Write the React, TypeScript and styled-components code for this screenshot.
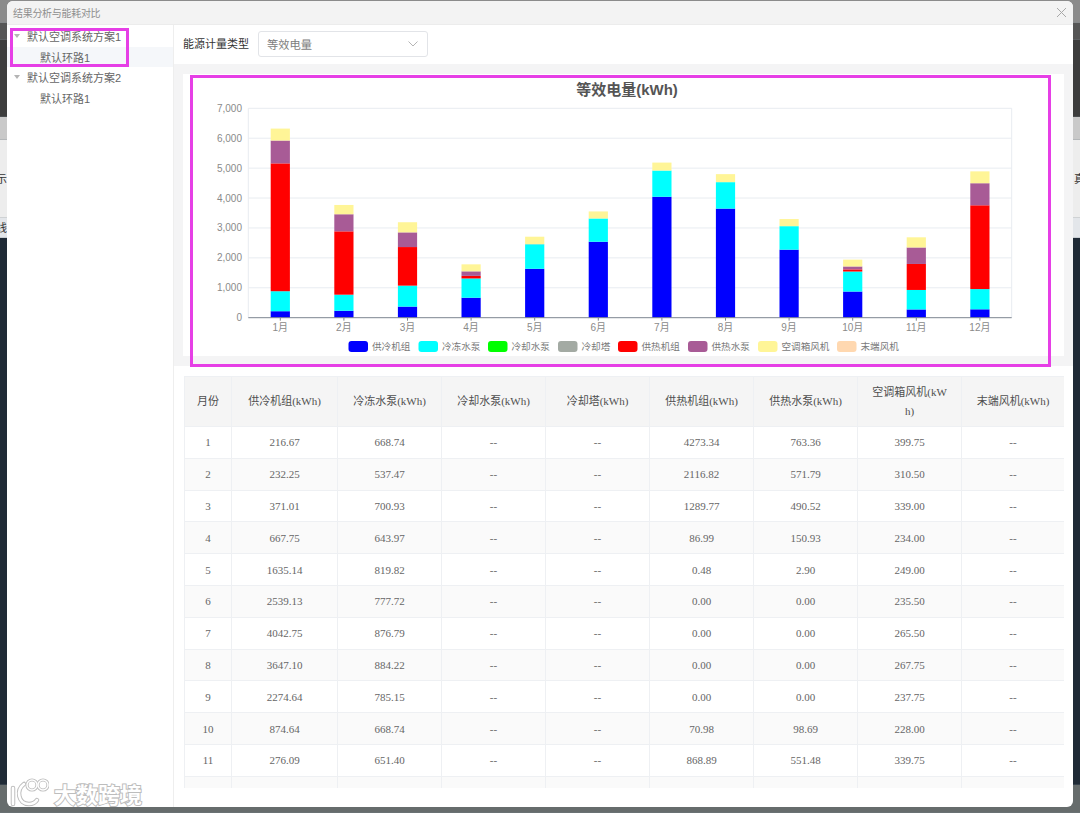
import React from "react";
import styled, { createGlobalStyle } from "styled-components";

const Global = createGlobalStyle`
  html, body { margin: 0; padding: 0; height: 813px; overflow: hidden; background: #1f2a36; }
  * { box-sizing: border-box; }
`;

const Page = styled.div`
  position: relative;
  width: 1080px;
  height: 813px;
  overflow: hidden;
  font-family: "Liberation Sans", "Noto Sans CJK SC", sans-serif;
`;

const Backdrop = styled.div`
  display: flex;
  flex-direction: column;
  height: 813px;
`;

const Band = styled.div<{ $h: number; $bg: string; $c?: string }>`
  flex: 0 0 ${(p) => p.$h}px;
  background: ${(p) => p.$bg};
  color: ${(p) => p.$c || "#333"};
  display: flex;
  justify-content: space-between;
  align-items: center;
  font-size: 11px;
  line-height: 12px;
  overflow: hidden;
  border-bottom: 1px solid rgba(120, 130, 140, 0.25);
`;

const EdgeLeft = styled.span`
  margin-left: -4px;
`;

const EdgeRight = styled.span`
  margin-right: -5px;
`;

const Modal = styled.div`
  position: absolute;
  left: 7px;
  top: 1px;
  width: 1066px;
  height: 806px;
  background: #fff;
  border-radius: 6px;
  overflow: hidden;
  display: flex;
  flex-direction: column;
`;

const ModalHeader = styled.header`
  flex: 0 0 24px;
  background: #f3f3f3;
  border-bottom: 1px solid #ececec;
  display: flex;
  align-items: center;
  justify-content: space-between;
  padding: 0 6px;
  color: #8e8e8e;
  font-size: 10px;
`;

const Title = styled.span`
  letter-spacing: -0.3px;
`;

const ModalBody = styled.div`
  flex: 1;
  display: flex;
  min-height: 0;
`;

const Sidebar = styled.aside`
  flex: 0 0 167px;
  border-right: 1px solid #eeeeee;
  padding-top: 1px;
`;

const TreeRow = styled.div<{ $child?: boolean; $selected?: boolean }>`
  height: 20.6px;
  display: flex;
  align-items: center;
  gap: 7px;
  padding-left: ${(p) => (p.$child ? 33 : 7)}px;
  background: ${(p) => (p.$selected ? "#f5f7fa" : "transparent")};
  color: #666;
  font-size: 11px;
  white-space: nowrap;
`;

const Caret = styled.i`
  width: 0;
  height: 0;
  margin-top: -1px;
  border-left: 3px solid transparent;
  border-right: 3px solid transparent;
  border-top: 4px solid #b4b4b4;
`;

const Content = styled.main`
  flex: 1;
  min-width: 0;
  display: flex;
  flex-direction: column;
`;

const FilterBar = styled.div`
  flex: 0 0 39px;
  display: flex;
  align-items: center;
  gap: 9px;
  padding-left: 9px;
  padding-bottom: 1px;
`;

const FilterLabel = styled.label`
  font-size: 11px;
  color: #333;
  margin-top: -2px;
`;

const Select = styled.div`
  width: 170px;
  height: 26px;
  border: 1px solid #e2e4e8;
  border-radius: 3px;
  display: flex;
  align-items: center;
  justify-content: space-between;
  padding: 0 9px 0 8px;
  font-size: 11.25px;
  color: #7d7d7d;
`;

const ChartBand = styled.section`
  flex: 0 0 302px;
  background: #f4f4f5;
  padding: 10px 9px 10px 9px;
`;

const ChartPanel = styled.div`
  height: 282px;
  background: #fff;
`;

const ChartSvg = styled.svg`
  display: block;
  font-family: "Liberation Sans", "Noto Sans CJK SC", sans-serif;
`;

const TableArea = styled.section`
  flex: 1;
  min-height: 0;
  padding: 10px 9px 19px 10px;
`;

const TableClip = styled.div`
  height: 100%;
  overflow: hidden;
`;

const DataTable = styled.table`
  width: 880px;
  table-layout: fixed;
  border-collapse: collapse;
  font-family: "Liberation Serif", "Noto Sans CJK SC", serif;
  font-size: 11px;
  color: #666;
`;

const Th = styled.th`
  height: 50px;
  padding: 0 12px;
  background: #f5f5f5;
  border: 1px solid #eef0f3;
  color: #4f4f4f;
  font-weight: 400;
  line-height: 19px;
  text-align: center;
  word-break: break-all;
`;

const Tr = styled.tr<{ $striped: boolean }>`
  height: 31.8px;
  background: ${(p) => (p.$striped ? "#fafafa" : "#fff")};
`;

const Td = styled.td`
  padding: 0;
  border: 1px solid #eef0f3;
  text-align: center;
`;

const Highlight = styled.div<{ $l: number; $t: number; $w: number; $h: number }>`
  position: absolute;
  left: ${(p) => p.$l}px;
  top: ${(p) => p.$t}px;
  width: ${(p) => p.$w}px;
  height: ${(p) => p.$h}px;
  border: 3px solid #e63fe6;
  pointer-events: none;
`;

const Watermark = styled.div`
  position: absolute;
  left: 9px;
  top: 778px;
  display: flex;
  align-items: center;
  gap: 5px;
`;

const WatermarkText = styled.span`
  font-family: "Noto Sans CJK SC", sans-serif;
  font-size: 22px;
  line-height: 30px;
  font-weight: 700;
  color: #fff;
  -webkit-text-stroke: 2px #bdbdbd;
  paint-order: stroke fill;
  letter-spacing: 0;
`;

const months = ["1月", "2月", "3月", "4月", "5月", "6月", "7月", "8月", "9月", "10月", "11月", "12月"];
const rows: string[][] = [
  ["1", "216.67", "668.74", "--", "--", "4273.34", "763.36", "399.75", "--"],
  ["2", "232.25", "537.47", "--", "--", "2116.82", "571.79", "310.50", "--"],
  ["3", "371.01", "700.93", "--", "--", "1289.77", "490.52", "339.00", "--"],
  ["4", "667.75", "643.97", "--", "--", "86.99", "150.93", "234.00", "--"],
  ["5", "1635.14", "819.82", "--", "--", "0.48", "2.90", "249.00", "--"],
  ["6", "2539.13", "777.72", "--", "--", "0.00", "0.00", "235.50", "--"],
  ["7", "4042.75", "876.79", "--", "--", "0.00", "0.00", "265.50", "--"],
  ["8", "3647.10", "884.22", "--", "--", "0.00", "0.00", "267.75", "--"],
  ["9", "2274.64", "785.15", "--", "--", "0.00", "0.00", "237.75", "--"],
  ["10", "874.64", "668.74", "--", "--", "70.98", "98.69", "228.00", "--"],
  ["11", "276.09", "651.40", "--", "--", "868.89", "551.48", "339.75", "--"],
  ["12", "280.48", "676.17", "--", "--", "2800.92", "737.84", "396.36", "--"],
];
const headers = ["月份", "供冷机组(kWh)", "冷冻水泵(kWh)", "冷却水泵(kWh)", "冷却塔(kWh)", "供热机组(kWh)", "供热水泵(kWh)", "空调箱风机(kWh)", "末端风机(kWh)"];
const widths = [47, 106, 104, 104, 104, 104, 104, 104, 103];

const series = [
  { name: "供冷机组", color: "#0000ff", col: 1, x: 165.5 },
  { name: "冷冻水泵", color: "#00ffff", col: 2, x: 235.5 },
  { name: "冷却水泵", color: "#00ff00", col: 3, x: 305 },
  { name: "冷却塔", color: "#a3aaa3", col: 4, x: 375 },
  { name: "供热机组", color: "#ff0000", col: 5, x: 435 },
  { name: "供热水泵", color: "#a85b96", col: 6, x: 505 },
  { name: "空调箱风机", color: "#fff597", col: 7, x: 575 },
  { name: "末端风机", color: "#ffd8b0", col: 8, x: 654 },
];

const plot = { left: 65.3, right: 828.7, top: 34.3, bottom: 243.7 };
const yOf = (v: number) => plot.bottom - (v / 7000) * (plot.bottom - plot.top);
const num = (s: string) => (s === "--" ? 0 : parseFloat(s));

const Chart = () => (
  <ChartSvg width={881} height={282} viewBox="0 0 881 282">
    <text x={444} y={21} textAnchor="middle" fontSize={15} fontWeight={700} fill="#555">
      等效电量(kWh)
    </text>
    {[0, 1, 2, 3, 4, 5, 6, 7].map((i) => (
      <g key={i}>
        {i > 0 && <line x1={plot.left} x2={plot.right} y1={yOf(i * 1000)} y2={yOf(i * 1000)} stroke="#e8ecf1" />}
        <text x={59} y={yOf(i * 1000) + 3.5} textAnchor="end" fontSize={10} fill="#8a8a8a">
          {i === 0 ? "0" : `${i},000`}
        </text>
      </g>
    ))}
    <line x1={plot.left} x2={plot.left} y1={plot.top} y2={plot.bottom} stroke="#e8ecf1" />
    <line x1={plot.right} x2={plot.right} y1={plot.top} y2={plot.bottom} stroke="#e8ecf1" />
    {months.map((m, i) => {
      const cx = 97.3 + i * 63.6;
      let acc = 0;
      return (
        <g key={m}>
          {series.map((s) => {
            const v = num(rows[i][s.col]);
            if (v <= 0) return null;
            const y1 = yOf(acc);
            acc += v;
            const y2 = yOf(acc);
            return <rect key={s.name} x={cx - 9.6} width={19.2} y={y2} height={y1 - y2} fill={s.color} />;
          })}
          <line x1={cx} x2={cx} y1={plot.bottom} y2={plot.bottom + 3} stroke="#7d8590" />
          <text x={cx} y={257} textAnchor="middle" fontSize={10} fill="#8a8a8a">
            {m}
          </text>
        </g>
      );
    })}
    <line x1={plot.left} x2={plot.right} y1={plot.bottom} y2={plot.bottom} stroke="#7d8590" />
    {series.map((s) => (
      <g key={s.name}>
        <rect x={s.x} y={267} width={19.5} height={11} rx={3} fill={s.color} />
        <text x={s.x + 23.5} y={275.5} fontSize={9.6} fill="#7a7a7a">
          {s.name}
        </text>
      </g>
    ))}
  </ChartSvg>
);

const Logo = () => (
  <svg width="40" height="30" viewBox="0 0 40 30" fill="none">
    <g stroke="#bdbdbd" strokeWidth="4.5" strokeLinecap="round">
      <path d="M4 10 L4 26" />
      <path d="M15 6 C7 12 9 26 20 26 C23 26 26 25 28 22" />
    </g>
    <g stroke="#bdbdbd" strokeWidth="3.2">
      <circle cx="23" cy="7" r="5" />
      <circle cx="34" cy="7" r="5" />
    </g>
    <g stroke="#fff" strokeWidth="2.6" strokeLinecap="round">
      <path d="M4 10 L4 26" />
      <path d="M15 6 C7 12 9 26 20 26 C23 26 26 25 28 22" />
    </g>
    <g stroke="#fff" strokeWidth="1.5">
      <circle cx="23" cy="7" r="5" />
      <circle cx="34" cy="7" r="5" />
    </g>
  </svg>
);

export default function App() {
  return (
    <Page>
      <Global />
      <Backdrop>
        <Band $h={23} $bg="#8b8b8b" />
        <Band $h={17} $bg="#565656" />
        <Band $h={77} $bg="#3d3d3d" />
        <Band $h={23} $bg="#c9c9c9" />
        <Band $h={78} $bg="#ededed">
          <EdgeLeft>示</EdgeLeft>
          <EdgeRight>真</EdgeRight>
        </Band>
        <Band $h={20} $bg="#e3e6ea">
          <EdgeLeft>线</EdgeLeft>
        </Band>
        <Band $h={547} $bg="#1f2a36" />
        <Band $h={28} $bg="#666c6c" />
      </Backdrop>
      <Modal>
        <ModalHeader>
          <Title>结果分析与能耗对比</Title>
          <svg width="11" height="11" viewBox="0 0 11 11" stroke="#a8a8a8" strokeWidth="1" fill="none">
            <path d="M1 1 L10 10 M10 1 L1 10" />
          </svg>
        </ModalHeader>
        <ModalBody>
          <Sidebar>
            <TreeRow>
              <Caret />
              默认空调系统方案1
            </TreeRow>
            <TreeRow $child $selected>
              默认环路1
            </TreeRow>
            <TreeRow>
              <Caret />
              默认空调系统方案2
            </TreeRow>
            <TreeRow $child>默认环路1</TreeRow>
          </Sidebar>
          <Content>
            <FilterBar>
              <FilterLabel>能源计量类型</FilterLabel>
              <Select>
                等效电量
                <svg width="10" height="6" viewBox="0 0 10 6" fill="none" stroke="#b5b5b5" strokeWidth="1">
                  <path d="M0.5 0.5 L5 5 L9.5 0.5" />
                </svg>
              </Select>
            </FilterBar>
            <ChartBand>
              <ChartPanel>
                <Chart />
              </ChartPanel>
            </ChartBand>
            <TableArea>
              <TableClip>
                <DataTable>
                  <colgroup>
                    {widths.map((w, i) => (
                      <col key={i} width={w} />
                    ))}
                  </colgroup>
                  <thead>
                    <tr>
                      {headers.map((h) => (
                        <Th key={h}>{h}</Th>
                      ))}
                    </tr>
                  </thead>
                  <tbody>
                    {rows.map((r, i) => (
                      <Tr key={r[0]} $striped={i % 2 === 1}>
                        {r.map((c, j) => (
                          <Td key={j}>{c}</Td>
                        ))}
                      </Tr>
                    ))}
                  </tbody>
                </DataTable>
              </TableClip>
            </TableArea>
          </Content>
        </ModalBody>
      </Modal>
      <Highlight $l={10} $t={28} $w={119} $h={39} />
      <Highlight $l={190} $t={75} $w={861} $h={292} />
      <Watermark>
        <Logo />
        <WatermarkText>大数跨境</WatermarkText>
      </Watermark>
    </Page>
  );
}
